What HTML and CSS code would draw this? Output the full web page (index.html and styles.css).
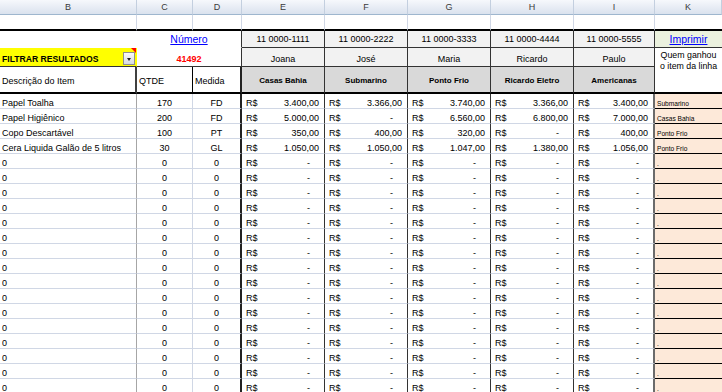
FILE: index.html
```html
<!DOCTYPE html>
<html lang="pt-BR">
<head>
    <meta charset="UTF-8">
    <title>Cotação de Preços</title>
    <link rel="stylesheet" href="styles.css">
</head>
<body>

<div class="sheet" id="sheet">
    <!-- column letters -->
    <div class="c hd">B</div>
    <div class="c hd">C</div>
    <div class="c hd">D</div>
    <div class="c hd">E</div>
    <div class="c hd">F</div>
    <div class="c hd">G</div>
    <div class="c hd">H</div>
    <div class="c hd">I</div>
    <div class="c hd">K</div>

    <!-- row 1 -->
    <div class="c r1"></div>
    <div class="c r1"></div>
    <div class="c r1"></div>
    <div class="c r1"></div>
    <div class="c r1"></div>
    <div class="c r1"></div>
    <div class="c r1"></div>
    <div class="c r1"></div>
    <div class="c r1 end"></div>

    <!-- row 2 -->
    <div class="c blank"></div>
    <div class="c num-label"><a href="#">Número</a></div>
    <div class="c box phone">11 0000-1111</div>
    <div class="c box phone">11 0000-2222</div>
    <div class="c box phone">11 0000-3333</div>
    <div class="c box phone">11 0000-4444</div>
    <div class="c box phone last">11 0000-5555</div>
    <div class="c print"><a href="#">Imprimir</a></div>

    <!-- row 3 -->
    <div class="c filter">
        FILTRAR RESULTADOS
        <span class="dd"></span>
        <span class="note"></span>
    </div>
    <div class="c num-val">41492</div>
    <div class="c box name">Joana</div>
    <div class="c box name">José</div>
    <div class="c box name">Maria</div>
    <div class="c box name">Ricardo</div>
    <div class="c box name last">Paulo</div>
    <div class="c who"><span>Quem ganhou</span><span>o item da linha</span></div>

    <!-- row 4 -->
    <div class="c th th-desc">Descrição do Item</div>
    <div class="c th th-qty">QTDE</div>
    <div class="c th th-unit">Medida</div>
    <div class="c store">Casas Bahia</div>
    <div class="c store">Submarino</div>
    <div class="c store">Ponto Frio</div>
    <div class="c store">Ricardo Eletro</div>
    <div class="c store last">Americanas</div>
</div>

<script>
    const items = [
        ['Papel Toalha', '170', 'FD', ['3.400,00', '3.366,00', '3.740,00', '3.366,00', '3.400,00'], 'Submarino'],
        ['Papel Higiênico', '200', 'FD', ['5.000,00', '-', '6.560,00', '6.800,00', '7.000,00'], 'Casas Bahia'],
        ['Copo Descartável', '100', 'PT', ['350,00', '400,00', '320,00', '-', '400,00'], 'Ponto Frio'],
        ['Cera Liquida Galão de 5 litros', '30', 'GL', ['1.050,00', '1.050,00', '1.047,00', '1.380,00', '1.056,00'], 'Ponto Frio']
    ];
    while (items.length < 20) {
        items.push(['0', '0', '0', ['-', '-', '-', '-', '-'], '.']);
    }

    const sheet = document.getElementById('sheet');

    function cell(cls, html) {
        const div = document.createElement('div');
        div.className = 'c ' + cls;
        div.innerHTML = html;
        sheet.appendChild(div);
    }

    items.forEach(function (item) {
        cell('desc', item[0]);
        cell('qty', item[1]);
        cell('unit', item[2]);
        item[3].forEach(function (price, i) {
            let cls = 'money';
            if (price === '-') cls += ' zero';
            if (i === 4) cls += ' last';
            cell(cls, '<span>R$</span><span>' + price + '</span>');
        });
        cell('win', item[4]);
    });
</script>

</body>
</html>
```

FILE: styles.css
```css
body {
    margin: 0;
    font-family: "Liberation Sans", Arial, sans-serif;
    font-size: 9px;
    color: #000;
    background: #fff;
}
.sheet {
    display: grid;
    grid-template-columns: 137px 56px 49px 83px 83px 83px 83px 81px 67px;
    grid-template-rows: 15px 16px 17px 19px 27px;
    grid-auto-rows: 15px;
    width: 722px;
    height: 392px;
    overflow: hidden;
}
.c {
    box-sizing: border-box;
    min-width: 0;
    display: flex;
    align-items: flex-end;
    padding: 0 2px;
    line-height: 10px;
    white-space: nowrap;
    overflow: hidden;
    border-right: 1px solid #d0d7e5;
    border-bottom: 1px solid #d0d7e5;
}
a {
    color: #0000ff;
}

/* column letters */
.hd {
    align-items: center;
    justify-content: center;
    color: #3a3a3a;
    background: linear-gradient(#f6f8fc, #dae2ee);
    border-right-color: #c3cfdf;
    border-bottom-color: #9eb6ce;
}

.r1 {
    border-bottom: 2px solid #000;
}
.r1.end {
    border-right: none;
}

/* top block */
.blank {
    border-color: #fff;
}
.num-label {
    grid-column: span 2;
    align-items: center;
    justify-content: center;
    font-size: 10.5px;
    border-bottom-color: #fff;
    border-right: 1px solid #333;
}
.num-val {
    grid-column: span 2;
    justify-content: center;
    padding-bottom: 2px;
    color: #ff0000;
    font-weight: bold;
    border-bottom: 1px solid #333;
    border-right: 1px solid #333;
}
.box {
    justify-content: center;
    background: #f2f2f2;
    border-right: 1px solid #333;
    border-bottom: 1px solid #333;
}
.phone {
    align-items: center;
}
.name {
    align-items: center;
    padding-top: 4px;
}
.print {
    align-items: center;
    justify-content: center;
    font-size: 10.5px;
    background: #ebf1de;
    border-right: none;
    border-bottom: 1px solid #333;
}
.who {
    grid-row: span 2;
    flex-direction: column;
    align-items: center;
    justify-content: flex-start;
    padding: 2px 0 0;
    font-size: 8.8px;
    line-height: 11px;
    border-right: none;
    border-bottom: 2px solid #000;
}

.filter {
    position: relative;
    padding-bottom: 2px;
    font-size: 8.6px;
    font-weight: bold;
    background: #ffff00;
    border-bottom: 1px solid #333;
    border-right-color: #ffff00;
}
.dd {
    position: absolute;
    right: 1px;
    bottom: 1px;
    width: 12px;
    height: 13px;
    box-sizing: border-box;
    border: 1px solid #8e8e8e;
    background: linear-gradient(#fafafa, #d6dae2);
}
.dd::after {
    content: "";
    position: absolute;
    left: 3px;
    top: 5px;
    border-left: 2.5px solid transparent;
    border-right: 2.5px solid transparent;
    border-top: 3px solid #222;
}
.note {
    position: absolute;
    top: 0;
    right: 0;
    border-left: 5px solid transparent;
    border-top: 5px solid #ff0000;
}

/* column titles */
.th {
    align-items: center;
    padding-top: 3px;
    border-bottom: 2px solid #000;
}
.th-desc {
    border-right: 2px solid #404040;
}
.th-qty {
    border-right: 1px solid #000;
}
.th-unit {
    border-right: 2px solid #222;
}
.store {
    align-items: center;
    justify-content: center;
    padding-top: 3px;
    font-size: 8px;
    font-weight: bold;
    background: #d9d9d9;
    border-right: 1px solid #333;
    border-bottom: 2px solid #000;
}

/* item rows */
.desc {
    border-right-color: #a6a6a6;
}
.qty, .unit {
    justify-content: center;
}
.unit {
    border-right: 2px solid #222;
}
.money {
    justify-content: space-between;
    padding: 0 5px 0 4px;
    border-right: 1px solid #333;
}
.money.zero {
    padding-right: 14px;
}
.money.last {
    border-right: 2px solid #6b6b6b;
}
.box.last, .store.last {
    border-right: 1px solid #333;
}
.win {
    padding-left: 2px;
    font-size: 6.6px;
    line-height: 8px;
    background: #fde9d9;
    border-right: none;
    border-bottom: 1px solid #000;
}
```
